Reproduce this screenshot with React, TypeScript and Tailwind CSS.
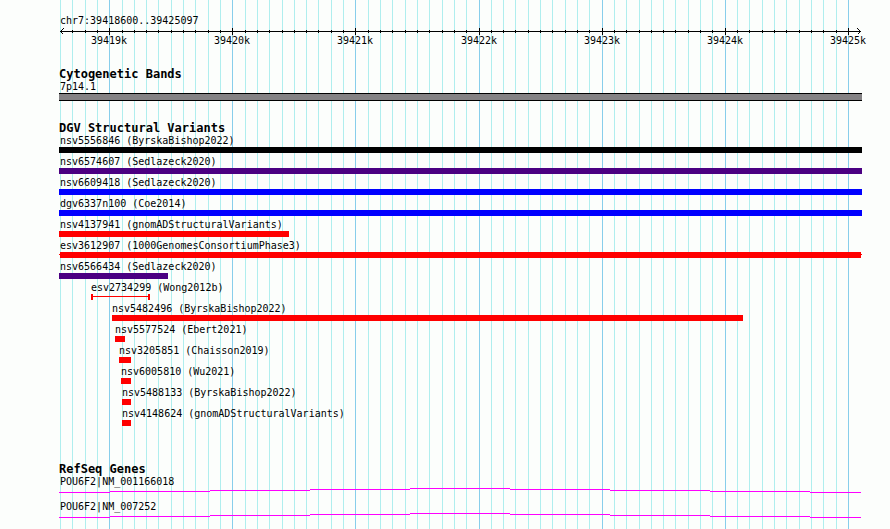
type Span = { start: number; end: number };
type Variant = Span & { name: string; color: string; shape?: "range" | "clipped" };

// Horizontal extent of the drawing area, in plot units.
const PLOT = 803;
const REGION_START = 39418600;
const REGION_END = 39425097;
const UNITS_PER_BASE = 0.1231;

const pct = (units: number) => `${(units / PLOT) * 100}%`;
const unitsAt = (base: number) => Math.round(0.98 + (base - REGION_START) * UNITS_PER_BASE);

const ticks: { x: number; major: boolean; label: string }[] = [];
for (let base = REGION_START; base < REGION_END - 90; base += 100) {
  ticks.push({ x: unitsAt(base), major: base % 1000 === 0, label: `${base / 1000}k` });
}

const variants: Variant[] = [
  { name: "nsv5556846 (ByrskaBishop2022)", start: 0, end: 803, color: "bg-black" },
  { name: "nsv6574607 (Sedlazeck2020)", start: 0, end: 803, color: "bg-[#4b0082]" },
  { name: "nsv6609418 (Sedlazeck2020)", start: 0, end: 803, color: "bg-[#0000ff]" },
  { name: "dgv6337n100 (Coe2014)", start: 0, end: 803, color: "bg-[#0000ff]" },
  { name: "nsv4137941 (gnomADStructuralVariants)", start: 0, end: 230, color: "bg-[#ff0000]" },
  { name: "esv3612907 (1000GenomesConsortiumPhase3)", start: 0, end: 803, color: "bg-[#ff0000]", shape: "clipped" },
  { name: "nsv6566434 (Sedlazeck2020)", start: 0, end: 109, color: "bg-[#4b0082]" },
  { name: "esv2734299 (Wong2012b)", start: 32, end: 91, color: "bg-[#ff0000]", shape: "range" },
  { name: "nsv5482496 (ByrskaBishop2022)", start: 53, end: 684, color: "bg-[#ff0000]" },
  { name: "nsv5577524 (Ebert2021)", start: 56, end: 66, color: "bg-[#ff0000]" },
  { name: "nsv3205851 (Chaisson2019)", start: 60, end: 72, color: "bg-[#ff0000]" },
  { name: "nsv6005810 (Wu2021)", start: 62, end: 72, color: "bg-[#ff0000]" },
  { name: "nsv5488133 (ByrskaBishop2022)", start: 63, end: 72, color: "bg-[#ff0000]" },
  { name: "nsv4148624 (gnomADStructuralVariants)", start: 63, end: 72, color: "bg-[#ff0000]" },
];

const genes = ["POU6F2|NM_001166018", "POU6F2|NM_007252"];

// Each intron segment sits one pixel above or below its neighbour.
const intron = [
  { start: 0, end: 51, y: 4 },
  { start: 51, end: 151, y: 3 },
  { start: 151, end: 251, y: 2 },
  { start: 251, end: 351, y: 1 },
  { start: 351, end: 451, y: 0 },
  { start: 451, end: 551, y: 1 },
  { start: 551, end: 651, y: 2 },
  { start: 651, end: 751, y: 3 },
  { start: 751, end: 802, y: 4 },
];

function Gridlines() {
  return (
    <svg className="absolute inset-0 -z-10 h-full w-full" shapeRendering="crispEdges" aria-hidden="true">
      {ticks.map((t) => (
        <rect key={t.x} x={pct(t.x)} y="0" width="1" height="100%" fill={t.major ? "#87ceeb" : "#afeeee"} />
      ))}
    </svg>
  );
}

function Ruler() {
  return (
    <header>
      <p className="pl-px">chr7:39418600..39425097</p>
      <svg className="block h-5 w-full overflow-visible" shapeRendering="crispEdges">
        <rect x={pct(1)} y="4" width={pct(801)} height="1" />
        {ticks.slice(1).map((t) => (
          <rect key={t.x} x={pct(t.x)} y={t.major ? 1 : 3} width="1" height={t.major ? 7 : 3} />
        ))}
        <path d="M4.5 1.5L1.5 4.5L4.5 7.5" fill="none" stroke="#000" />
        <svg x={pct(802)} className="overflow-visible">
          <path d="M-3.5 1.5L-0.5 4.5L-3.5 7.5" fill="none" stroke="#000" />
        </svg>
        {ticks
          .filter((t) => t.major)
          .map((t) => (
            <text key={t.x} x={pct(t.x)} y="17" textAnchor="middle">
              {t.label}
            </text>
          ))}
      </svg>
    </header>
  );
}

function TrackTitle({ children }: { children: string }) {
  return <h2 className="pt-0.5 text-[12px] leading-[11px] font-bold">{children}</h2>;
}

function Glyph({ start, end, color, shape }: Variant) {
  const place = { marginLeft: pct(start), width: pct(end - start) };
  if (shape === "range") {
    return (
      <div className="flex h-1.5 justify-between" style={place}>
        <span className={`w-0.5 ${color}`} />
        <span className={`mt-0.5 h-px flex-1 ${color}`} />
        <span className={`w-0.5 ${color}`} />
      </div>
    );
  }
  if (shape === "clipped") {
    return (
      <div className="flex h-1.5" style={place}>
        <span className={`mt-0.5 h-px w-px ${color}`} />
        <span className={`flex-1 ${color}`} />
        <span className={`mt-0.5 h-px w-px ${color}`} />
      </div>
    );
  }
  return <div className={`h-1.5 ${color}`} style={place} />;
}

export default function App() {
  return (
    <div className="min-h-screen bg-[#fcfefc] pr-7 pl-[59px] font-['DejaVu_Sans_Mono',monospace] text-[10px] leading-[13px] whitespace-nowrap text-black">
      <main className="relative isolate flex min-h-screen flex-col pt-3.5">
        <Gridlines />
        <Ruler />

        <section className="mt-5">
          <TrackTitle>Cytogenetic Bands</TrackTitle>
          <p className="pl-px">7p14.1</p>
          <div className="h-2 border-y border-black bg-[#848284]" />
        </section>

        <section className="mt-5">
          <TrackTitle>DGV Structural Variants</TrackTitle>
          <ul>
            {variants.map((v) => (
              <li key={v.name} className="pb-0.5">
                <p style={{ marginLeft: pct(Math.max(v.start, 1)) }}>{v.name}</p>
                <Glyph {...v} />
              </li>
            ))}
          </ul>
        </section>

        <section className="mt-[34px]">
          <TrackTitle>RefSeq Genes</TrackTitle>
          <ul>
            {genes.map((gene) => (
              <li key={gene} className="h-[25px]">
                <p className="pl-px">{gene}</p>
                <svg className="block h-[5px] w-full" shapeRendering="crispEdges" aria-hidden="true">
                  {intron.map((s) => (
                    <rect key={s.start} x={pct(s.start)} y={s.y} width={pct(s.end - s.start)} height="1" fill="#ff00ff" />
                  ))}
                </svg>
              </li>
            ))}
          </ul>
        </section>
      </main>
    </div>
  );
}
